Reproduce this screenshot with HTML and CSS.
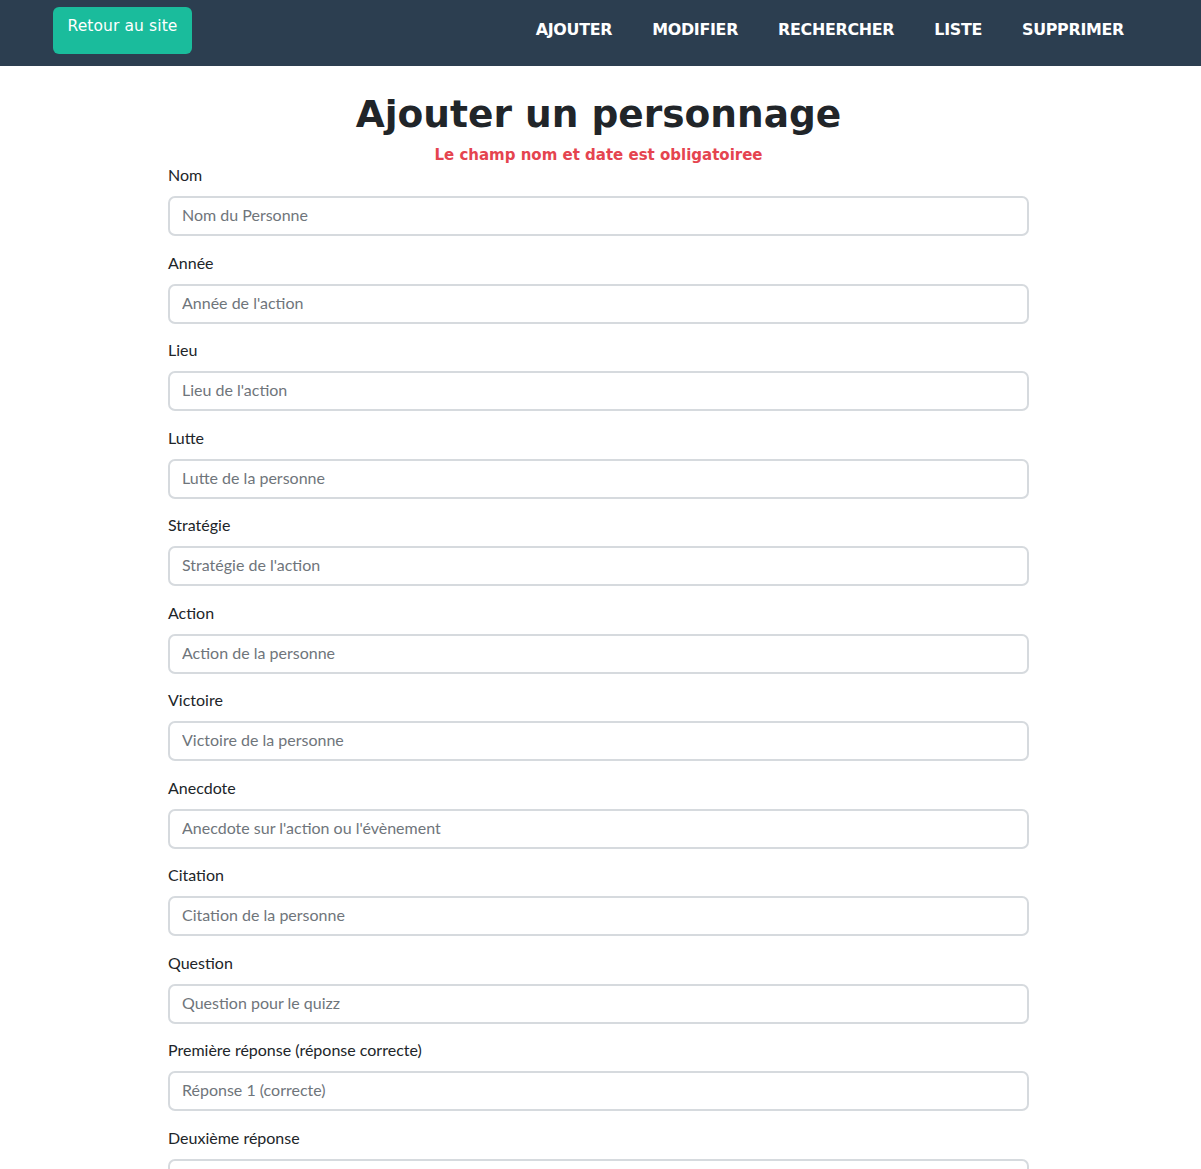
FILE: index.html
```html
<!DOCTYPE html>
<html lang="fr">
<head>
<meta charset="utf-8">
<title>Ajouter un personnage</title>
<link rel="stylesheet" href="styles.css">
</head>
<body>
<header class="navbar">
  <a class="btn-back" href="#">Retour au site</a>
  <nav class="nav-links">
    <a href="#">AJOUTER</a>
    <a href="#">MODIFIER</a>
    <a href="#">RECHERCHER</a>
    <a href="#">LISTE</a>
    <a href="#">SUPPRIMER</a>
  </nav>
</header>
<main class="wrap">
  <div class="content">
    <h1 class="title">Ajouter un personnage</h1>
    <p class="error">Le champ nom et date est obligatoiree</p>
    <form class="form">
      <div class="field"><label>Nom</label><input type="text" placeholder="Nom du Personne"></div>
      <div class="field"><label>Année</label><input type="text" placeholder="Année de l'action"></div>
      <div class="field"><label>Lieu</label><input type="text" placeholder="Lieu de l'action"></div>
      <div class="field"><label>Lutte</label><input type="text" placeholder="Lutte de la personne"></div>
      <div class="field"><label>Stratégie</label><input type="text" placeholder="Stratégie de l'action"></div>
      <div class="field"><label>Action</label><input type="text" placeholder="Action de la personne"></div>
      <div class="field"><label>Victoire</label><input type="text" placeholder="Victoire de la personne"></div>
      <div class="field"><label>Anecdote</label><input type="text" placeholder="Anecdote sur l'action ou l'évènement"></div>
      <div class="field"><label>Citation</label><input type="text" placeholder="Citation de la personne"></div>
      <div class="field"><label>Question</label><input type="text" placeholder="Question pour le quizz"></div>
      <div class="field"><label>Première réponse (réponse correcte)</label><input type="text" placeholder="Réponse 1 (correcte)"></div>
      <div class="field"><label>Deuxième réponse</label><input type="text"></div>
    </form>
  </div>
</main>
</body>
</html>
```
FILE: styles.css
```css
* { box-sizing: border-box; }
html, body { margin: 0; padding: 0; }
body {
  font-family: Lato, "Open Sans", sans-serif;
  color: #212529;
  background: #fff;
}
.navbar {
  height: 66px;
  background: #2c3e50;
  display: flex;
  align-items: flex-start;
  justify-content: space-between;
  padding: 7px 77px 0 53px;
}
.btn-back {
  display: flex;
  align-items: center;
  justify-content: center;
  width: 139px;
  height: 47px;
  padding-bottom: 10px;
  background: #1abc9c;
  color: #fff;
  border-radius: 6px;
  text-decoration: none;
  font-family: "DejaVu Sans", sans-serif;
  font-size: 15.5px;
  letter-spacing: 0.1px;
}
.nav-links {
  display: flex;
  gap: 40px;
  padding-top: 13px;
}
.nav-links a {
  color: #fff;
  text-decoration: none;
  font-family: "DejaVu Sans", sans-serif;
  font-weight: 700;
  font-size: 15.9px;
  letter-spacing: -0.3px;
}
.wrap {
  width: 865px;
  margin: 0 auto;
  padding-right: 4px;
}
.content { width: 861px; }
.title {
  margin: 24px 0 0;
  text-align: center;
  font-family: "DejaVu Sans", sans-serif;
  font-weight: 700;
  font-size: 37.5px;
  line-height: 48px;
  color: #212529;
}
.error {
  margin: 7px 0 0;
  text-align: center;
  color: #e5444f;
  font-family: "DejaVu Sans", sans-serif;
  font-weight: 700;
  font-size: 15px;
  line-height: 20px;
}
.form { display: flex; flex-direction: column; }
.field { display: flex; flex-direction: column; margin-bottom: 16.5px; }
.field label {
  font-size: 16px;
  line-height: 20px;
  margin: 0 0 11px;
}
.field input {
  width: 100%;
  height: 40px;
  border: 2px solid #d6dade;
  border-radius: 7px;
  padding: 0 12px 3px;
  font-family: Lato, sans-serif;
  font-size: 16px;
  color: #212529;
}
.field input::placeholder { color: #6f757b; }
```
